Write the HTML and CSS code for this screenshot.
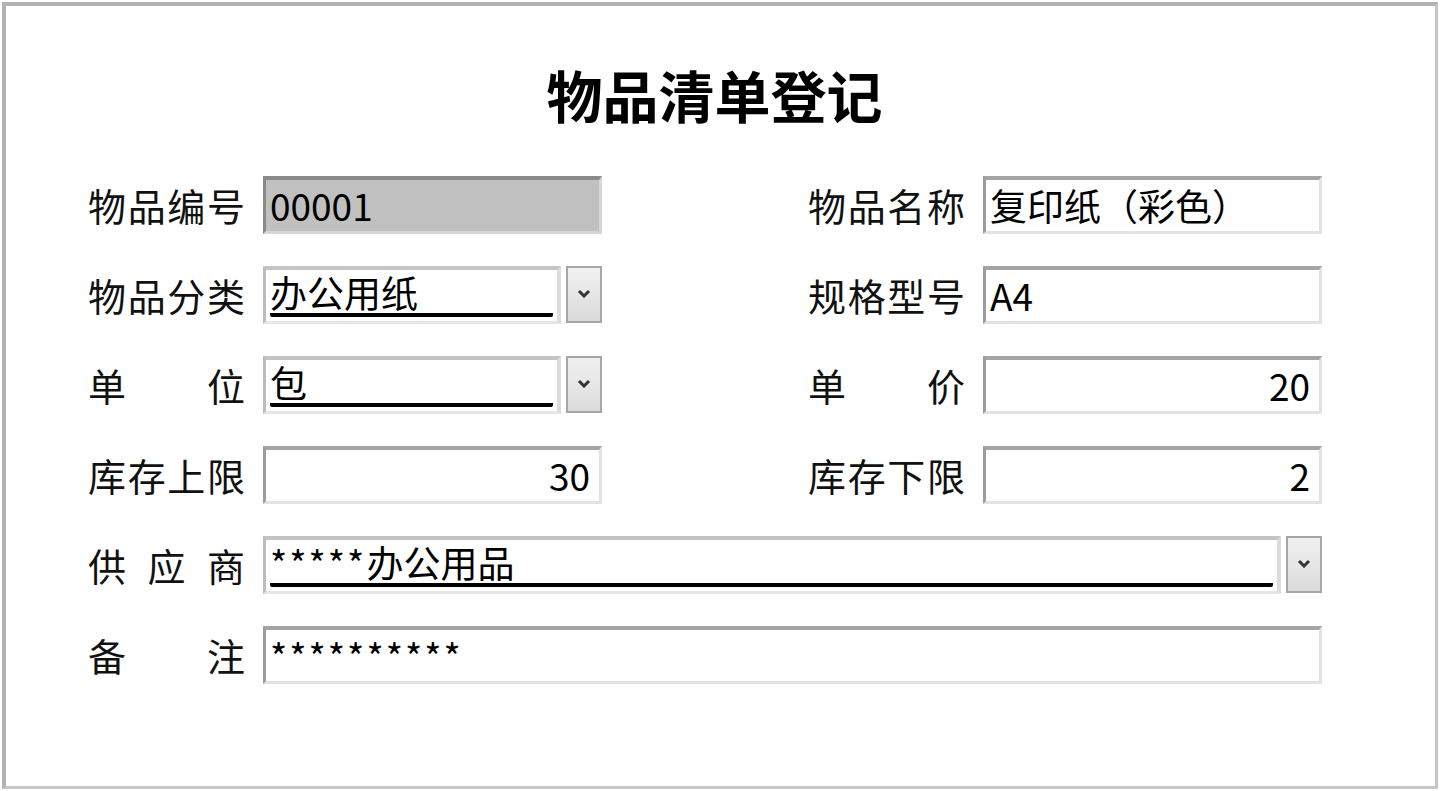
FILE: index.html
```html
<!DOCTYPE html>
<html lang="zh-CN">
<head>
<meta charset="utf-8">
<title>物品清单登记</title>
<link rel="stylesheet" href="styles.css">
</head>
<body>
<div class="window">
  <h1 class="title">物品清单登记</h1>
  <div class="form">
    <div class="row">
      <div class="field">
        <div class="label"><span>物</span><span>品</span><span>编</span><span>号</span></div>
        <div class="input readonly">00001</div>
      </div>
      <div class="field">
        <div class="label"><span>物</span><span>品</span><span>名</span><span>称</span></div>
        <div class="input">复印纸（彩色）</div>
      </div>
    </div>
    <div class="row">
      <div class="field">
        <div class="label"><span>物</span><span>品</span><span>分</span><span>类</span></div>
        <div class="combo">
          <div class="edit"><div class="sel">办公用纸</div></div>
          <div class="btn"><svg width="14" height="9" viewBox="0 0 14 9"><polyline points="2,2 7,7 12,2" fill="none" stroke="#333" stroke-width="3"/></svg></div>
        </div>
      </div>
      <div class="field">
        <div class="label"><span>规</span><span>格</span><span>型</span><span>号</span></div>
        <div class="input">A4</div>
      </div>
    </div>
    <div class="row">
      <div class="field">
        <div class="label"><span>单</span><span>位</span></div>
        <div class="combo">
          <div class="edit"><div class="sel">包</div></div>
          <div class="btn"><svg width="14" height="9" viewBox="0 0 14 9"><polyline points="2,2 7,7 12,2" fill="none" stroke="#333" stroke-width="3"/></svg></div>
        </div>
      </div>
      <div class="field">
        <div class="label"><span>单</span><span>价</span></div>
        <div class="input num">20</div>
      </div>
    </div>
    <div class="row">
      <div class="field">
        <div class="label"><span>库</span><span>存</span><span>上</span><span>限</span></div>
        <div class="input num">30</div>
      </div>
      <div class="field">
        <div class="label"><span>库</span><span>存</span><span>下</span><span>限</span></div>
        <div class="input num">2</div>
      </div>
    </div>
    <div class="row">
      <div class="field wide">
        <div class="label"><span>供</span><span>应</span><span>商</span></div>
        <div class="combo">
          <div class="edit"><div class="sel"><span class="stars">*****</span>办公用品</div></div>
          <div class="btn"><svg width="14" height="9" viewBox="0 0 14 9"><polyline points="2,2 7,7 12,2" fill="none" stroke="#333" stroke-width="3"/></svg></div>
        </div>
      </div>
    </div>
    <div class="row">
      <div class="field wide">
        <div class="label"><span>备</span><span>注</span></div>
        <div class="input"><span class="stars">**********</span></div>
      </div>
    </div>
  </div>
</div>
</body>
</html>
```

FILE: styles.css
```css
html, body {
  margin: 0;
  padding: 0;
  background: #ffffff;
}

body {
  font-family: "Noto Sans CJK SC", "Noto Sans", sans-serif;
  color: #000;
}

.window {
  box-sizing: border-box;
  width: 1436px;
  height: 787px;
  margin: 2px 0 0 2px;
  border-top: 4px solid #b2b2b2;
  border-left: 4px solid #b2b2b2;
  border-right: 3px solid #c6c6c6;
  border-bottom: 3px solid #c6c6c6;
  padding: 56px 0 0 82px;
  background: #fff;
}

.title {
  margin: 0 0 50px 0;
  height: 64px;
  line-height: 64px;
  font-size: 56px;
  font-weight: 700;
  text-align: center;
  padding-right: 94px;
}

.form {
  display: flex;
  flex-direction: column;
  gap: 32px;
}

.row {
  display: flex;
  gap: 206px;
  height: 58px;
}

.field {
  display: flex;
  align-items: center;
  gap: 18px;
  width: 514px;
}

.field.wide {
  width: 1234px;
}

.label {
  width: 157px;
  display: flex;
  justify-content: space-between;
  font-size: 38px;
  line-height: 58px;
  color: #111;
}

.input {
  box-sizing: border-box;
  flex: none;
  width: 339px;
  height: 58px;
  border-top: 4px solid #a4a4a4;
  border-left: 3px solid #9c9c9c;
  border-right: 3px solid #e2e2e2;
  border-bottom: 3px solid #e2e2e2;
  background: #fff;
  padding: 0 9px 0 4px;
  font-size: 37px;
  line-height: 50px;
  white-space: nowrap;
}

.field.wide .input {
  width: 1059px;
}

.input.readonly {
  background: #c0c0c0;
  border-top-color: #8a8a8a;
  border-left-color: #8a8a8a;
  border-right-color: #d6d6d6;
  border-bottom-color: #d6d6d6;
}

.input.num {
  text-align: right;
}

.stars {
  letter-spacing: 2px;
}

.combo {
  display: flex;
  gap: 5px;
  width: 339px;
  height: 58px;
  flex: none;
}

.field.wide .combo {
  width: 1059px;
}

.edit {
  box-sizing: border-box;
  flex: 1;
  height: 58px;
  border-top: 4px solid #c4c4c4;
  border-left: 3px solid #bcbcbc;
  border-right: 4px solid #dcdcdc;
  border-bottom: 3px solid #e6e6e6;
  padding: 0 4px 0 4px;
  background: #fff;
}

.sel {
  box-sizing: border-box;
  height: 47px;
  border-bottom: 4px solid #000;
  border-radius: 2px;
  font-size: 37px;
  line-height: 44px;
  white-space: nowrap;
}

.btn {
  box-sizing: border-box;
  width: 36px;
  height: 57px;
  border: 2px solid #a6a6a6;
  background: linear-gradient(180deg, #f0f0f0 0%, #e4e4e4 60%, #dadada 100%);
  display: flex;
  align-items: center;
  justify-content: center;
  padding-bottom: 2px;
}
```
